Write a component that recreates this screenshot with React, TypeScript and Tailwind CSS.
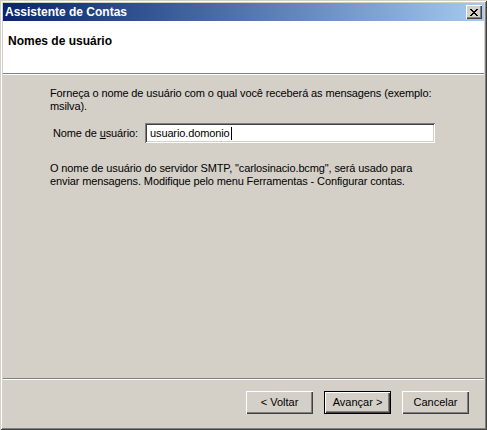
import React from "react";

const font = { fontFamily: '"Liberation Sans", Arial, sans-serif' };

function CloseGlyph() {
  const rows = [
    "XX....XX",
    ".XX..XX.",
    "..XXXX..",
    "...XX...",
    "..XXXX..",
    ".XX..XX.",
    "XX....XX",
  ];
  const rects: React.ReactElement[] = [];
  rows.forEach((r, y) =>
    r.split("").forEach((c, x) => {
      if (c === "X") rects.push(<rect key={`${x}-${y}`} x={x} y={y} width={1} height={1} fill="#000" />);
    })
  );
  return (
    <svg width="8" height="7" viewBox="0 0 8 7" shapeRendering="crispEdges">
      {rects}
    </svg>
  );
}

function Button({ label, def }: { label: string; def?: boolean }) {
  return (
    <div
      className={
        "flex h-[23px] w-[67px] items-center justify-center bg-[#d4d0c8] text-[11px] text-black " +
        (def
          ? "shadow-[inset_1px_1px_0_#000,inset_-1px_-1px_0_#000,inset_2px_2px_0_#fff,inset_-2px_-2px_0_#404040,inset_-3px_-3px_0_#808080]"
          : "shadow-[inset_1px_1px_0_#fff,inset_-1px_-1px_0_#404040,inset_-2px_-2px_0_#808080]")
      }
    >
      {label}
    </div>
  );
}

export default function App() {
  return (
    <div
      style={font}
      className="flex h-[430px] w-[487px] flex-col bg-[#d4d0c8] p-[3px] text-[11px] leading-[13px] text-black shadow-[inset_1px_1px_0_#d4d0c8,inset_-1px_-1px_0_#404040,inset_2px_2px_0_#ffffff,inset_-2px_-2px_0_#808080]"
    >
      {/* Title bar */}
      <div className="flex h-[18px] shrink-0 items-center justify-between bg-gradient-to-r from-[#0a246a] to-[#a6caf0] pl-[2px] pr-[2px]">
        <span className="text-[12px] font-bold leading-[14px] text-white">Assistente de Contas</span>
        <div className="flex h-[14px] w-[16px] items-center justify-center bg-[#d4d0c8] shadow-[inset_1px_1px_0_#fff,inset_-1px_-1px_0_#404040,inset_-2px_-2px_0_#808080]">
          <CloseGlyph />
        </div>
      </div>

      {/* Header */}
      <div className="h-[52px] shrink-0 bg-white pl-[5px] pt-[13px]">
        <span className="text-[12px] font-bold leading-[14px]">Nomes de usuário</span>
      </div>
      <div className="h-px shrink-0 bg-[#808080]" />
      <div className="h-px shrink-0 bg-white" />

      {/* Body */}
      <div className="flex flex-1 flex-col pl-[47px] pt-[12px] tracking-[-0.12px]">
        <p className="whitespace-nowrap">
          Forneça o nome de usuário com o qual você receberá as mensagens (exemplo:
          <br />
          msilva).
        </p>
        <div className="mt-[10px] flex items-center">
          <span className="ml-[3px] w-[92px]">
            Nome de <span className="underline">u</span>suário:
          </span>
          <div className="flex h-[20px] w-[290px] items-center bg-white pl-[5px] shadow-[inset_1px_1px_0_#808080,inset_-1px_-1px_0_#fff,inset_2px_2px_0_#404040,inset_-2px_-2px_0_#d4d0c8]">
            <span>usuario.domonio</span>
            <span className="ml-px h-[13px] w-px bg-black" />
          </div>
        </div>
        <p className="mt-[19px] whitespace-nowrap">
          O nome de usuário do servidor SMTP, "carlosinacio.bcmg", será usado para
          <br />
          enviar mensagens. Modifique pelo menu Ferramentas - Configurar contas.
        </p>
      </div>

      {/* Footer */}
      <div className="h-px shrink-0 bg-[#808080]" />
      <div className="h-px shrink-0 bg-white" />
      <div className="flex h-[47px] shrink-0 items-start justify-end gap-[11px] pr-[15px] pt-[11px]">
        <Button label="< Voltar" />
        <Button label="Avançar >" def />
        <Button label="Cancelar" />
      </div>
    </div>
  );
}
